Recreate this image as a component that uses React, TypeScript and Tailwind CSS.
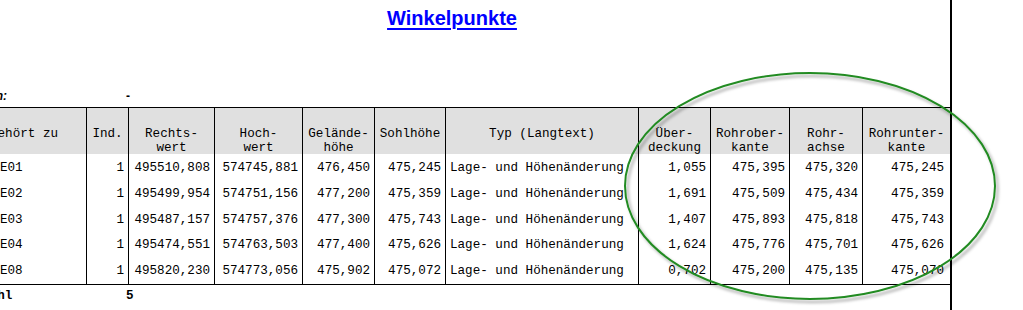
const mono = { fontFamily: '"Liberation Mono", "Courier New", monospace' };

type Col = { head: string[]; align: "left" | "right" | "text" };

const cols: Col[] = [
  { head: ["Gehört zu"], align: "left" },
  { head: ["Ind."], align: "right" },
  { head: ["Rechts-", "wert"], align: "right" },
  { head: ["Hoch-", "wert"], align: "right" },
  { head: ["Gelände-", "höhe"], align: "right" },
  { head: ["Sohlhöhe"], align: "right" },
  { head: ["Typ (Langtext)"], align: "text" },
  { head: ["Über-", "deckung"], align: "right" },
  { head: ["Rohrober-", "kante"], align: "right" },
  { head: ["Rohr-", "achse"], align: "right" },
  { head: ["Rohrunter-", "kante"], align: "right" },
];

const typ = "Lage- und Höhenänderung";

const rows: string[][] = [
  ["E01", "1", "495510,808", "574745,881", "476,450", "475,245", typ, "1,055", "475,395", "475,320", "475,245"],
  ["E02", "1", "495499,954", "574751,156", "477,200", "475,359", typ, "1,691", "475,509", "475,434", "475,359"],
  ["E03", "1", "495487,157", "574757,376", "477,300", "475,743", typ, "1,407", "475,893", "475,818", "475,743"],
  ["E04", "1", "495474,551", "574763,503", "477,400", "475,626", typ, "1,624", "475,776", "475,701", "475,626"],
  ["E08", "1", "495820,230", "574773,056", "475,902", "475,072", typ, "0,702", "475,200", "475,135", "475,070"],
];

function HeadCell({ col, last }: { col: Col; last: boolean }) {
  return (
    <div
      className={`h-[46px] bg-[#e0e0e0] pt-[19px] leading-[14px] whitespace-nowrap ${
        col.align === "left" ? "pl-[10px] text-left" : "text-center"
      } ${last ? "" : "border-r border-black"}`}
    >
      {col.head.map((line) => (
        <div key={line}>{line}</div>
      ))}
    </div>
  );
}

function DataCell({ value, col, first, last }: { value: string; col: Col; first: boolean; last: boolean }) {
  const align =
    col.align === "left"
      ? "justify-start pl-[20px]"
      : col.align === "text"
        ? "justify-start pl-[4px]"
        : last
          ? "justify-end pr-[6px]"
          : "justify-end pr-[4px]";
  return (
    <div
      className={`flex items-center whitespace-nowrap ${align} ${first ? "h-[27.6px] pt-[2px]" : "h-[25.6px]"} ${
        last ? "" : "border-r border-black"
      }`}
    >
      {value}
    </div>
  );
}

export default function App() {
  return (
    <div className="relative w-[1023px] h-[310px] overflow-hidden bg-white text-black">
      <div className="-ml-[46px] w-[998px] h-[310px] border-r-2 border-black">
        <div className="pt-[7px] text-center">
          <span
            className="text-[20px] leading-[23px] font-bold text-[#0000ff] underline decoration-2 underline-offset-[3px]"
            style={{ fontFamily: '"Liberation Sans", Arial, sans-serif' }}
          >
            Winkelpunkte
          </span>
        </div>

        <div
          className="mt-[57px] flex h-[16px] items-center text-[12px] font-bold"
          style={{ fontFamily: '"Liberation Sans", Arial, sans-serif' }}
        >
          <span className="w-[53px] text-right italic">Bereich:</span>
          <span className="ml-[119px]">-</span>
        </div>

        <div
          className="mt-[3px] ml-[26px] w-[970px] border-y border-black text-[12.6px] grid grid-cols-[107px_42px_86px_88px_72px_71px_193px_72px_79px_73px_87px]"
          style={mono}
        >
          {cols.map((c, i) => (
            <HeadCell key={c.head.join("")} col={c} last={i === cols.length - 1} />
          ))}
          {rows.map((r, ri) =>
            r.map((v, ci) => (
              <DataCell
                key={`${ri}-${ci}`}
                value={v}
                col={cols[ci]}
                first={ri === 0}
                last={ci === cols.length - 1}
              />
            )),
          )}
        </div>

        <div className="mt-[3.5px] flex h-[16px] items-center text-[12.6px] font-bold" style={mono}>
          <span className="w-[172px] pl-[13px]">Anzahl</span>
          <span>5</span>
        </div>
      </div>

      <svg className="pointer-events-none absolute inset-0" width="1023" height="310" viewBox="0 0 1023 310">
        <defs>
          <filter id="shadow" x="-10%" y="-10%" width="120%" height="130%">
            <feDropShadow dx="2.5" dy="3" stdDeviation="1.8" floodColor="#000" floodOpacity="0.35" />
          </filter>
        </defs>
        <ellipse cx="810" cy="186" rx="185" ry="113" fill="none" stroke="#228b22" strokeWidth="2" filter="url(#shadow)" />
      </svg>
    </div>
  );
}
